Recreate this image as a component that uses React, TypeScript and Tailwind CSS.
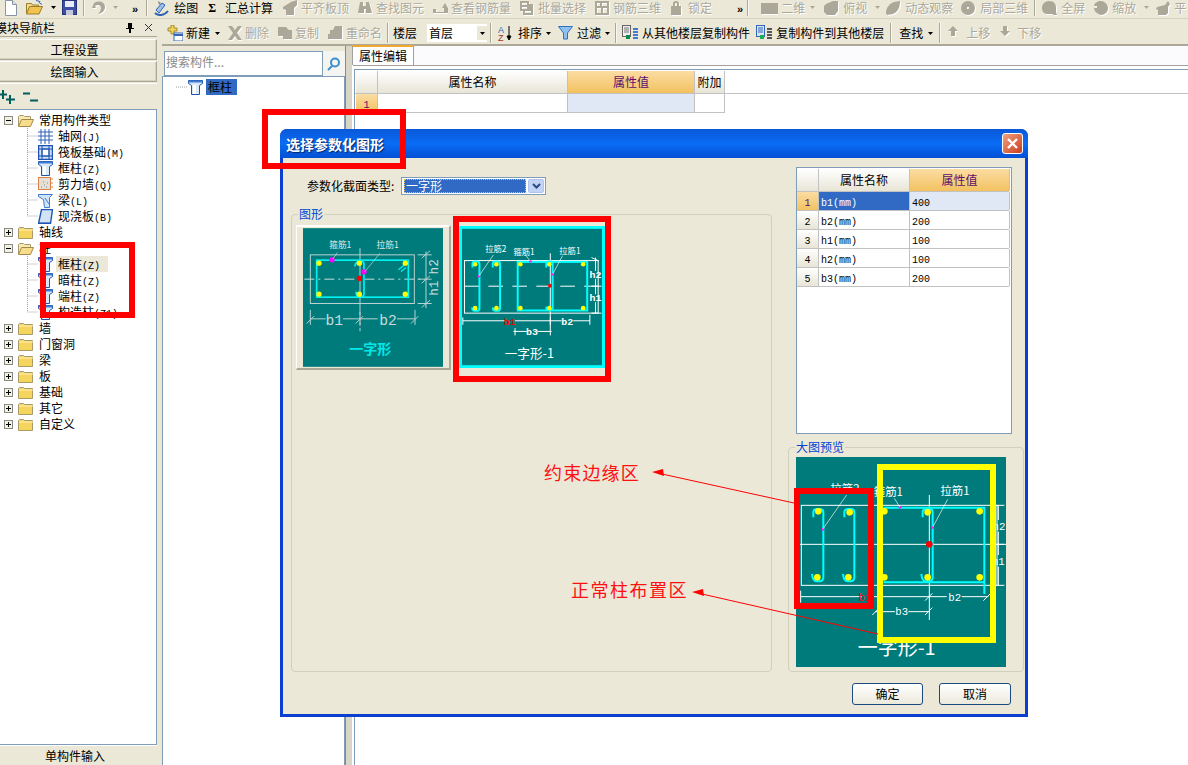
import React from "react";

const D = "text-[#aca899] [text-shadow:1px_1px_0_#fff]";
const CJK = "Noto Sans CJK SC, sans-serif";

function Ghost({ d, w = 16 }: { d: string; w?: number }) {
  return (
    <svg width={w} height={16} viewBox={`0 0 ${w} 16`} className="shrink-0">
      <path d={d} fill="#fff" fillRule="evenodd" transform="translate(1,1)" />
      <path d={d} fill="#aca899" fillRule="evenodd" />
    </svg>
  );
}

function Caret({ grey }: { grey?: boolean }) {
  return (
    <svg width={5} height={3} viewBox="0 0 5 3" className="shrink-0">
      <path d="M0 0h5L2.5 3z" fill={grey ? "#aca899" : "#000"} />
    </svg>
  );
}

function Sep({ h = 20 }: { h?: number }) {
  return <div className="w-[2px] shrink-0 border-l border-[#aca899] border-r-white bg-white/60" style={{ height: h }} />;
}

function More() {
  return <span className="text-[11px] leading-none font-bold text-black [font-family:'Liberation_Sans',sans-serif] -mt-2">»</span>;
}

function G({ d, t, w, caret }: { d: string; t: string; w?: number; caret?: boolean }) {
  return (
    <div className="flex items-center gap-[3px] shrink-0">
      <Ghost d={d} w={w} />
      <span className={D}>{t}</span>
      {caret && <span className="ml-[3px]"><Caret grey /></span>}
    </div>
  );
}

function PageIcon() {
  return (
    <svg width={14} height={16} viewBox="0 0 14 16" className="shrink-0">
      <path d="M1.5 .5h7l4 4v11h-11z" fill="#fff" stroke="#8b93a7" />
      <path d="M8.5 .5v4h4" fill="#dfe6f2" stroke="#8b93a7" />
    </svg>
  );
}
function OpenFolderBig() {
  return (
    <svg width={17} height={15} viewBox="0 0 17 15" className="shrink-0">
      <path d="M.5 13V3.5h5l1 1.5h6v2" fill="#f3d98a" stroke="#9b7d30" />
      <path d="M.5 14l3-7.5h13L13 14z" fill="#f1c34f" stroke="#9b7d30" />
      <path d="M10 .5l4 1-1 1 3 2" fill="none" stroke="#3566b8" />
    </svg>
  );
}
function Floppy() {
  return (
    <svg width={15} height={15} viewBox="0 0 15 15" className="shrink-0">
      <rect x=".5" y=".5" width="14" height="14" fill="#3c4ea6" stroke="#26327a" />
      <rect x="3" y="1" width="9" height="6" fill="#e8ecf7" />
      <rect x="4" y="10" width="7" height="5" fill="#c5c9d9" />
    </svg>
  );
}
function DrawIcon() {
  return (
    <svg width={16} height={16} viewBox="0 0 16 16" className="shrink-0">
      <path d="M2 10l6-7 3 2-6 8z" fill="#9ec1ea" stroke="#2f62b4" />
      <path d="M1 13c3 3 9 3 13-2" fill="none" stroke="#2f62b4" strokeWidth="2" />
      <path d="M4 1l3 2-2 2z" fill="#888" />
    </svg>
  );
}

function ColumnIcon() {
  return (
    <svg width={15} height={16} viewBox="0 0 15 16" className="shrink-0">
      <path d="M.5 1.5h14v3l-3 2v9h-8v-9l-3-2z" fill="#dbe8f8" stroke="#1f55b0" />
      <path d="M.5 1.5h14v2H.5z" fill="#3f7bd0" />
      <path d="M5 6h3v9H5z" fill="#fff" />
    </svg>
  );
}
function GridIcon() {
  return (
    <svg width={15} height={15} viewBox="0 0 15 15" className="shrink-0">
      <path d="M3 0v15M7 0v15M11 0v15M0 3h15M0 7h15M0 11h15" stroke="#2f62b4" fill="none" />
    </svg>
  );
}
function RaftIcon() {
  return (
    <svg width={15} height={15} viewBox="0 0 15 15" className="shrink-0">
      <rect x=".5" y=".5" width="14" height="14" fill="#cfe0f5" stroke="#1f55b0" strokeWidth="1.5" />
      <rect x="4" y="4" width="7" height="7" fill="#fff" stroke="#1f55b0" />
      <path d="M0 4h15M0 11h15M4 0v15M11 0v15" stroke="#1f55b0" />
    </svg>
  );
}
function WallIcon() {
  return (
    <svg width={15} height={14} viewBox="0 0 15 14" className="shrink-0">
      <rect x=".5" y=".5" width="12" height="12" fill="#e4e0d8" stroke="#d9824a" />
      <path d="M13 2h2M13 6h2M13 10h2" stroke="#d9824a" />
      <path d="M3 10h1M6 8h1M8 10h1M5 5h1M9 6h1" stroke="#888" />
    </svg>
  );
}
function BeamIcon() {
  return (
    <svg width={15} height={16} viewBox="0 0 15 16" className="shrink-0">
      <path d="M.5 2.5h14l-3 3v10h-5l-1-8-5-3z" fill="#cfe4f7" stroke="#3f7bd0" />
      <path d="M7 6l4 6" stroke="#3f7bd0" />
    </svg>
  );
}
function SlabIcon() {
  return (
    <svg width={15} height={15} viewBox="0 0 15 15" className="shrink-0">
      <path d="M3.5.5h11l-2 14H.5z" fill="#d3e3f7" stroke="#1f55b0" strokeWidth="1.4" />
      <path d="M.5 14.5h12" stroke="#1f55b0" strokeWidth="2" />
    </svg>
  );
}
function Folder({ open }: { open?: boolean }) {
  return (
    <svg width={16} height={13} viewBox="0 0 16 13" className="shrink-0">
      {open ? (
        <>
          <path d="M.5 12V2.5l1-1h4l1 1h6v3" fill="#f9e9b0" stroke="#a89a6a" />
          <path d="M.5 12.5l3-7h12l-3 7z" fill="#f7dc8b" stroke="#a08a4a" />
        </>
      ) : (
        <>
          <path d="M.5 2.5l1-1h4l1 1h8v10H.5z" fill="#f6d55f" stroke="#a89a6a" />
          <path d="M1 4h14" stroke="#fdf0b8" />
        </>
      )}
    </svg>
  );
}
function Box({ open }: { open?: boolean }) {
  return (
    <svg width={9} height={9} viewBox="0 0 9 9" className="shrink-0">
      <rect x=".5" y=".5" width="8" height="8" fill="#f3f1e6" stroke="#8a8a80" />
      <path d={open ? "M2 4.5h5" : "M2 4.5h5M4.5 2v5"} stroke="#000" />
    </svg>
  );
}
function Conn({ last }: { last?: boolean }) {
  return (
    <svg width={11} height={16} viewBox="0 0 11 16" className="shrink-0">
      <path d={last ? "M.5 0v8H11" : "M.5 0v16M.5 8H11"} stroke="#a0a0a0" strokeDasharray="1 1" fill="none" />
    </svg>
  );
}

function Mono({ children }: { children: React.ReactNode }) {
  return <span className="text-[10px] [font-family:'Liberation_Mono',monospace]">{children}</span>;
}

function Child({ icon, t, k, last, sel }: { icon: React.ReactNode; t: string; k: string; last?: boolean; sel?: boolean }) {
  return (
    <div className="flex h-[16px] items-center pl-[27px]">
      <Conn last={last} />
      <span className="w-[15px] flex justify-center">{icon}</span>
      <span className={`ml-[3px] px-[2px] h-[16px] leading-[16px] whitespace-nowrap ${sel ? "bg-[#ebe8d8] pr-[8px]" : ""}`}>
        {t}
        <Mono>({k})</Mono>
      </span>
    </div>
  );
}
function Root({ t, open }: { t: string; open?: boolean }) {
  return (
    <div className="flex h-[16px] items-center pl-[4px]">
      <Box open={open} />
      <span className="ml-[5px]"><Folder open={open} /></span>
      <span className="ml-[5px] leading-[16px]">{t}</span>
    </div>
  );
}

function Thumb1() {
  const f = { fontFamily: CJK };
  return (
    <svg width={140} height={139} viewBox="24 40 420 416" className="block shrink-0">
      <rect x="24" y="40" width="420" height="416" fill="#007b7b" />
      <rect x="46" y="120" width="312" height="146" fill="none" stroke="#b6d2d2" strokeWidth="3" />
      <path d="M28 193H390" stroke="#c9dcdc" strokeWidth="3" strokeDasharray="30 12 6 12" />
      <path d="M195 100V350" stroke="#b6d2d2" strokeWidth="3" />
      <path d="M195 285V350" stroke="#123" strokeWidth="3" strokeDasharray="6 10" />
      <rect x="65" y="136" width="275" height="111" fill="none" stroke="#00f0f0" strokeWidth="5" />
      <path d="M180 155q0-15 15-15h6q6 0 6 10v85q0 10-6 10h-8q-10 0-10-14" fill="none" stroke="#00f0f0" strokeWidth="5" />
      <path d="M310 165l25-20M318 170l15-12" stroke="#00f0f0" strokeWidth="4" />
      {[[72, 145], [193, 145], [331, 145], [72, 238], [193, 238], [331, 238]].map(([x, y]) => (
        <circle key={`${x}${y}`} cx={x} cy={y} r={8} fill="#ffff00" />
      ))}
      <circle cx="111" cy="135" r="8" fill="#ff00ff" />
      <circle cx="207" cy="171" r="8" fill="#ff00ff" />
      <circle cx="193" cy="191" r="8" fill="#ff0000" />
      <path d="M127 113l-14 20M255 115l-46 56" stroke="#c9dcdc" strokeWidth="2" />
      <text x="136" y="99" textAnchor="middle" fontSize="26" fill="#d9e8e8" style={f}>箍筋1</text>
      <text x="278" y="99" textAnchor="middle" fontSize="26" fill="#d9e8e8" style={f}>拉筋1</text>
      <path d="M46 312H92M144 312H248M306 312H360M46 285V330M195 285V330M360 285V330" stroke="#b6d2d2" strokeWidth="3" fill="none" />
      <path d="M35 326l22-22M182 326l22-22M348 326l22-22" stroke="#b6d2d2" strokeWidth="3" />
      <text x="118" y="330" textAnchor="middle" fontSize="44" fill="#c9dcdc" style={{ fontFamily: "Liberation Mono, monospace" }}>b1</text>
      <text x="279" y="330" textAnchor="middle" fontSize="44" fill="#c9dcdc" style={{ fontFamily: "Liberation Mono, monospace" }}>b2</text>
      <path d="M393 110V280M368 120H410M368 193H410M368 266H410" stroke="#b6d2d2" strokeWidth="3" />
      <path d="M380 130l25-22M380 205l25-22M380 278l25-22" stroke="#b6d2d2" strokeWidth="3" />
      <text transform="translate(430 156) rotate(-90)" textAnchor="middle" fontSize="38" fill="#c9dcdc" style={{ fontFamily: "Liberation Mono, monospace" }}>h2</text>
      <text transform="translate(430 220) rotate(-90)" textAnchor="middle" fontSize="38" fill="#c9dcdc" style={{ fontFamily: "Liberation Mono, monospace" }}>h1</text>
      <text x="226" y="418" textAnchor="middle" fontSize="42" fontWeight="700" fill="#00e8e8" style={f}>一字形</text>
    </svg>
  );
}

function Thumb2() {
  const f = { fontFamily: CJK };
  const mono = { fontFamily: "Liberation Mono, monospace", fontWeight: 700 };
  return (
    <svg width={146} height={142} viewBox="27 33 438 427" className="block shrink-0">
      <rect x="27" y="33" width="438" height="427" fill="#007b7b" />
      <rect x="31" y="37" width="430" height="419" fill="none" stroke="#00ffff" strokeWidth="9" />
      <rect x="43" y="137" width="402" height="158" fill="none" stroke="#fff" strokeWidth="3" />
      <path d="M43 214H455" stroke="#fff" strokeWidth="3" strokeDasharray="44 28" />
      <path d="M301 115V340" stroke="#fff" strokeWidth="3" />
      <path d="M67 158v-12q0-6 8-6h5q8 0 8 8v132q0 8-8 8h-6q-8 0-8-10" fill="none" stroke="#00ffff" strokeWidth="6" />
      <path d="M128 158v-12q0-6 8-6h6q8 0 8 8v132q0 8-8 8h-6q-8 0-8-10" fill="none" stroke="#00ffff" strokeWidth="6" />
      <rect x="203" y="141" width="209" height="146" fill="none" stroke="#00ffff" strokeWidth="6" />
      <path d="M289 158v-12q0-6 8-6h6q5 0 5 8v132q0 6-5 6h-6q-8 0-8-10" fill="none" stroke="#00ffff" strokeWidth="6" />
      {[[75, 148], [139, 148], [211, 148], [298, 148], [400, 148], [75, 280], [139, 280], [211, 280], [298, 280], [400, 280]].map(([x, y]) => (
        <circle key={`${x}${y}`} cx={x} cy={y} r={7} fill="#ffff00" />
      ))}
      {[[86, 184], [241, 139], [308, 178]].map(([x, y]) => (
        <circle key={`${x}${y}`} cx={x} cy={y} r={4} fill="#ff00ff" />
      ))}
      <circle cx="300" cy="213" r="6" fill="#ff0000" />
      <path d="M130 120L86 184M228 122L241 139M338 122L308 178" stroke="#fff" strokeWidth="2" />
      <text x="137" y="112" textAnchor="middle" fontSize="25" fill="#fff" style={f}>拉筋2</text>
      <text x="222" y="119" textAnchor="middle" fontSize="25" fill="#fff" style={f}>箍筋1</text>
      <text x="360" y="116" textAnchor="middle" fontSize="25" fill="#fff" style={f}>拉筋1</text>
      <path d="M38 318H165M195 318H335M370 318H420M38 308V330M420 300V330M301 308V330" stroke="#fff" strokeWidth="3" fill="none" />
      <text x="179" y="330" textAnchor="middle" fontSize="30" fill="#ff0000" style={mono}>b1</text>
      <text x="352" y="330" textAnchor="middle" fontSize="30" fill="#fff" style={mono}>b2</text>
      <path d="M190 350H230M262 350H305M195 340V362M301 340V362" stroke="#fff" strokeWidth="3" fill="none" />
      <text x="246" y="360" textAnchor="middle" fontSize="30" fill="#fff" style={mono}>b3</text>
      <path d="M437 128V168M437 192V238M437 262V295M425 128l22 10M425 295h30M425 214h30" stroke="#fff" strokeWidth="3" fill="none" />
      <text x="437" y="189" textAnchor="middle" fontSize="30" fill="#fff" style={mono}>h2</text>
      <text x="437" y="259" textAnchor="middle" fontSize="30" fill="#fff" style={mono}>h1</text>
      <text x="238" y="431" textAnchor="middle" fontSize="38" fill="#fff" style={f}>一字形-1</text>
    </svg>
  );
}

function Preview() {
  const f = { fontFamily: CJK };
  const mono = { fontFamily: "Liberation Mono, monospace" };
  return (
    <svg width={210} height={210} viewBox="33 51 630 630" className="block shrink-0">
      <rect x="33" y="51" width="630" height="630" fill="#007b7b" />
      <rect x="49" y="196" width="587" height="240" fill="none" stroke="#fff" strokeWidth="3" />
      <path d="M33 313H663" stroke="#fff" strokeWidth="3" />
      <path d="M433 165V540" stroke="#fff" strokeWidth="3" />
      <path d="M85 232v-15q0-10 12-10h8q10 0 10 10v195q0 12-12 12h-8q-12 0-14-22" fill="none" stroke="#00ffff" strokeWidth="6" />
      <path d="M178 232v-15q0-10 12-10h8q10 0 10 10v195q0 12-12 12h-8q-12 0-14-22" fill="none" stroke="#00ffff" strokeWidth="6" />
      <path d="M295 203H598V462M295 427H598" fill="none" stroke="#00ffff" strokeWidth="6" />
      <path d="M413 232v-15q0-10 12-10h8q10 0 10 10v195q0 12-12 12h-8q-12 0-14-22" fill="none" stroke="#00ffff" strokeWidth="6" />
      {[[100, 214], [194, 217], [298, 214], [428, 217], [584, 214], [97, 412], [190, 412], [298, 412], [428, 412], [584, 412]].map(([x, y]) => (
        <circle key={`${x}${y}`} cx={x} cy={y} r={10} fill="#ffff00" />
      ))}
      {[[113, 268], [345, 202], [443, 262]].map(([x, y]) => (
        <circle key={`${x}${y}`} cx={x} cy={y} r={4} fill="#ff00ff" />
      ))}
      <circle cx="433" cy="313" r="10" fill="#ff0000" />
      <path d="M185 165L113 268M328 175L345 202M488 178L443 262" stroke="#fff" strokeWidth="2" />
      <text x="180" y="160" textAnchor="middle" fontSize="34" fill="#fff" style={f}>拉筋2</text>
      <text x="310" y="169" textAnchor="middle" fontSize="34" fill="#fff" style={f}>箍筋1</text>
      <text x="510" y="165" textAnchor="middle" fontSize="34" fill="#fff" style={f}>拉筋1</text>
      <path d="M45 470H230M255 470H485M530 470H610M420 482l22-22M595 482l22-22M47 452V488" stroke="#fff" strokeWidth="3" fill="none" />
      <text x="240" y="484" textAnchor="middle" fontSize="32" fill="#ff0000" style={mono}>b1</text>
      <text x="509" y="484" textAnchor="middle" fontSize="32" fill="#fff" style={mono}>b2</text>
      <path d="M270 515H330M370 515H435M262 525l22-22M420 525l22-22" stroke="#fff" strokeWidth="3" fill="none" />
      <text x="350" y="525" textAnchor="middle" fontSize="32" fill="#fff" style={mono}>b3</text>
      <path d="M640 196V240M640 275V345M640 380V436M630 196h28M630 313h28M630 436h28" stroke="#fff" strokeWidth="3" fill="none" />
      <text x="642" y="270" textAnchor="middle" fontSize="32" fill="#fff" style={mono}>h2</text>
      <text x="640" y="374" textAnchor="middle" fontSize="32" fill="#fff" style={mono}>h1</text>
      <text x="335" y="645" textAnchor="middle" fontSize="60" fill="#fff" style={f}>一字形-1</text>
    </svg>
  );
}

function TopBar() {
  return (
    <div className="flex h-[19px] shrink-0 items-center overflow-hidden whitespace-nowrap pl-[4px] pb-[3px] border-b border-[#d6d2c0] text-[12px]">
      <PageIcon />
      <span className="ml-[8px]"><OpenFolderBig /></span>
      <span className="ml-[8px]"><Caret /></span>
      <span className="ml-[6px]"><Floppy /></span>
      <span className="ml-[6px]"><Sep h={16} /></span>
      <span className="ml-[6px]"><Ghost d="M3 3l-2 5h4L4 6c3-2 6-1 6 2 0 2-1 4-3 6 5-1 7-4 7-7 0-5-6-7-11-4z" w={15} /></span>
      <span className="ml-[7px]"><Caret grey /></span>
      <span className="ml-[14px]"><More /></span>
      <span className="ml-[8px] mr-[6px] flex gap-[1px]"><Sep h={17} /></span>
      <div className="flex items-center gap-[4px]"><DrawIcon /><span>绘图</span></div>
      <span className="ml-[10px] font-bold text-[12px] [font-family:'Liberation_Serif',serif]">Σ</span>
      <span className="ml-[9px] mr-[9px]">汇总计算</span>
      <div className="flex items-center gap-[8px]">
        <G t="平齐板顶" d="M1 7l8-5 6-2v5l-3 3v7H4v-5L1 9z" />
        <G t="查找图元" d="M3 2h3v4h3V2h3l3 11h-6V9H7v4H1z" />
        <G t="查看钢筋量" d="M1 9h3v3h8V8l-2 0 3-5 3 5v5H1z" />
        <G t="批量选择" d="M1 1h9v3h4v11H4v-4H1zM3 3v2h5V3zM3 7v2h5V7zM6 11v2h6v-2z" />
        <G t="钢筋三维" d="M1 1h14v14H1zM3 3v3h3V3zM8 3v3h5V3zM3 8v5h4V8zM9 8v5h4V8z" />
        <div className="flex items-center gap-[5px]"><Ghost w={14} d="M4 6V4a3 3 0 0 1 6 0v2h2v9H2V6zM6 6h2V4a1 1 0 0 0-2 0z" /><span className={D}>锁定</span></div>
      </div>
      <span className="ml-[25px]"><More /></span>
      <span className="ml-[4px] flex"><Sep h={17} /></span>
      <div className="ml-[12px] flex items-center">
        <Ghost w={17} d="M0 3h17v11H0z" />
        <span className={`${D} ml-[3px]`}>二维</span>
        <span className="ml-[5px]"><Caret grey /></span>
        <span className="ml-[8px]"><Ghost d="M3 4l7-3h5v10l-3 4H4L1 12V6z" /></span>
        <span className={`${D} ml-[4px]`}>俯视</span>
        <span className="ml-[8px]"><Caret grey /></span>
        <span className="ml-[5px]"><Ghost d="M1 13c0-5 3-9 8-11l6-1c0 6-2 11-7 13l-6 1z" /></span>
        <span className={`${D} ml-[4px]`}>动态观察</span>
        <span className="ml-[7px]"><Ghost d="M8 1a7 7 0 1 1 0 14A7 7 0 0 1 8 1zM7 7v2h2V7z" /></span>
        <span className={`${D} ml-[4px]`}>局部三维</span>
        <span className="ml-[6px] mr-[5px] flex"><Sep h={17} /></span>
        <Ghost d="M8 1c5 0 7 3 7 6v5l1 3h-3l-2-1H6c-3 0-5-3-5-6 0-4 3-7 7-7z" />
        <span className={`${D} ml-[4px]`}>全屏</span>
        <span className="ml-[8px]"><Ghost d="M8 1c3 0 7 3 7 7s-3 7-7 7c-2 0-7-3-7-7h3V6H1c0-3 4-5 7-5z" /></span>
        <span className={`${D} ml-[3px]`}>缩放</span>
        <span className="ml-[8px]"><Caret grey /></span>
        <span className="ml-[6px]"><Ghost w={17} d="M2 7l8-2 3-4 2 3-2 3v6l-2 2H3V10L1 9z" /></span>
        <span className={`${D} ml-[2px]`}>平</span>
      </div>
    </div>
  );
}

function SideButton({ t }: { t: string }) {
  return (
    <div className="h-[21px] flex items-center justify-center pr-[7px] bg-[#ebe8d8] border-t border-white border-r border-b border-r-[#aca899] border-b-[#aca899] shadow-[inset_-1px_-1px_0_#d6d2c0]">
      {t}
    </div>
  );
}

function LeftPanel() {
  return (
    <div className="flex w-[157px] shrink-0 flex-col">
      <div className="flex h-[18px] items-center justify-between border-b border-[#aca899] pr-[3px] overflow-hidden">
        <span className="-ml-[5px] whitespace-nowrap">模块导航栏</span>
        <div className="flex items-center gap-[9px] pr-[1px]">
          <svg width={10} height={11} viewBox="0 0 10 11"><path d="M3 1h4v5h2v1H6v4H4V7H1V6h2z" fill="#000" /></svg>
          <svg width={9} height={9} viewBox="0 0 9 9"><path d="M1 1l7 7M8 1l-7 7" stroke="#333" /></svg>
        </div>
      </div>
      <div className="mt-[2px] flex flex-col gap-[1px]">
        <SideButton t="工程设置" />
        <SideButton t="绘图输入" />
      </div>
      <div className="mt-[1px] h-[26px] flex items-center border-t border-[#fff]">
        <svg width={40} height={16} viewBox="0 0 40 16" className="shrink-0">
          <path d="M3 1v9M-1 5.5h8M10 6v9M6 10.5h9M23 4.5h7M30 11.5h8" stroke="#005e5e" strokeWidth="2" fill="none" />
        </svg>
      </div>
      <div className="flex-1 bg-white border border-[#7f9db9] border-l-0 pt-[2px] overflow-hidden">
        <Root t="常用构件类型" open />
        <Child icon={<GridIcon />} t="轴网" k="J" />
        <Child icon={<RaftIcon />} t="筏板基础" k="M" />
        <Child icon={<ColumnIcon />} t="框柱" k="Z" />
        <Child icon={<WallIcon />} t="剪力墙" k="Q" />
        <Child icon={<BeamIcon />} t="梁" k="L" />
        <Child icon={<SlabIcon />} t="现浇板" k="B" last />
        <Root t="轴线" />
        <Root t="柱" open />
        <Child icon={<ColumnIcon />} t="框柱" k="Z" sel />
        <Child icon={<ColumnIcon />} t="暗柱" k="Z" />
        <Child icon={<ColumnIcon />} t="端柱" k="Z" />
        <Child icon={<ColumnIcon />} t="构造柱" k="Z1" last />
        {["墙", "门窗洞", "梁", "板", "基础", "其它", "自定义"].map((t) => (
          <Root key={t} t={t} />
        ))}
      </div>
      <div className="h-[20px] flex items-center justify-center border-t border-white pr-[7px] whitespace-nowrap">单构件输入</div>
    </div>
  );
}

function Toolbar2() {
  return (
    <div className="h-[27px] shrink-0 flex items-center whitespace-nowrap border-b-2 border-[#aca899] pl-[5px] pt-[3px]">
      <svg width={16} height={16} viewBox="0 0 16 16" className="shrink-0"><path d="M4 0v3H1v3h3v3h3V6h3V3H7V0z" fill="#f0d45a" stroke="#a48a2a" /><rect x="7" y="8" width="9" height="8" fill="#fff" stroke="#3566b8" /><path d="M7 10h9" stroke="#3566b8" strokeWidth="2" /></svg>
      <span className="ml-[3px]">新建</span>
      <span className="ml-[5px]"><Caret /></span>
      <span className="ml-[7px]"><G t="删除" w={15} d="M1 1h4l3 4 3-4h4l-5 7 5 7h-4l-3-4-3 4H1l5-7z" /></span>
      <span className="ml-[8px]"><G t="复制" w={15} d="M1 2h8l3 3h3v9H6v-3H1z" /></span>
      <span className="ml-[8px]"><G t="重命名" d="M8 1h7v13H1V9h2V5h3z" /></span>
      <span className="ml-[5px] mr-[4px]"><Sep /></span>
      <span>楼层</span>
      <div className="ml-[10px] w-[60px] h-[18px] bg-white flex items-center">
        <span className="pl-[2px] flex-1">首层</span>
        <span className="w-[10px] h-[14px] bg-[#ebe8d8] flex items-center justify-center"><Caret /></span>
      </div>
      <span className="ml-[3px] mr-[6px]"><Sep /></span>
      <svg width={15} height={16} viewBox="0 0 15 16" className="shrink-0"><text x="0" y="8" fontSize="9" fill="#3566b8" style={{ fontFamily: "Liberation Sans, sans-serif" }}>A</text><text x="0" y="16" fontSize="9" fill="#a03030" style={{ fontFamily: "Liberation Sans, sans-serif" }}>Z</text><path d="M11 1v12M9 11l2 4 2-4z" stroke="#000" /></svg>
      <span className="ml-[5px]">排序</span>
      <span className="ml-[4px]"><Caret /></span>
      <svg width={15} height={14} viewBox="0 0 15 14" className="ml-[7px] shrink-0"><path d="M.5.5h14L9.5 7v6h-4V7z" fill="#8fc0ee" stroke="#2f72c4" /></svg>
      <span className="ml-[4px]">过滤</span>
      <span className="ml-[4px]"><Caret /></span>
      <span className="ml-[5px] mr-[5px]"><Sep /></span>
      <svg width={16} height={16} viewBox="0 0 16 16" className="shrink-0"><rect x=".5" y=".5" width="8" height="11" fill="#eee" stroke="#666" /><path d="M2 3h5M2 5h5M2 7h5" stroke="#777" /><path d="M4 10h4v4H4z" fill="#0a8a4a" /><path d="M11 4h5M11 7h5M11 10h5M11 13h5" stroke="#3f7bd0" strokeWidth="2" /></svg>
      <span className="ml-[4px]">从其他楼层复制构件</span>
      <svg width={16} height={16} viewBox="0 0 16 16" className="ml-[6px] shrink-0"><rect x=".5" y=".5" width="8" height="11" fill="#d7e4f6" stroke="#3566b8" /><path d="M2 3h5M2 5h5M2 7h5" stroke="#3566b8" /><path d="M4 10h4v4H4z" fill="#18b050" /><path d="M11 4h5M11 7h5M11 10h5M11 13h5" stroke="#555" strokeWidth="2" /></svg>
      <span className="ml-[4px]">复制构件到其他楼层</span>
      <span className="ml-[6px] mr-[7px]"><Sep /></span>
      <span>查找</span>
      <span className="ml-[5px]"><Caret /></span>
      <span className="ml-[6px] mr-[7px]"><Sep /></span>
      <Ghost w={10} d="M5 1l5 5H7v5H3V6H0z" />
      <span className={`${D} ml-[8px]`}>上移</span>
      <span className="ml-[10px]"><Ghost w={10} d="M3 1h4v5h3l-5 5-5-5h3z" /></span>
      <span className={`${D} ml-[7px]`}>下移</span>
    </div>
  );
}

function Th({ t, hot, w }: { t: string; hot?: boolean; w: string }) {
  return (
    <div
      className={`${w} shrink-0 h-full flex items-center justify-center border-r border-[#c2c2c2] ${
        hot ? "bg-linear-to-b from-[#fbdca2] to-[#f3c25f] text-[#5c0f6e]" : "bg-linear-to-b from-white to-[#e8e5d6]"
      }`}
    >
      {t}
    </div>
  );
}

function MainArea() {
  return (
    <div className="flex-1 bg-white flex flex-col min-w-0">
      <div className="h-[20px] flex items-end bg-[#fbfbfd] border-b border-[#a0a0a0]">
        <div className="w-[62px] h-[20px] ml-[-1px] bg-white border-t-2 border-t-[#f0a830] border-x border-[#a0a0a0] flex items-center justify-center">属性编辑</div>
      </div>
      <div className="mt-[3px] flex-1 border-t border-l border-[#7f9db9] ml-[1px]">
        <div className="flex h-[23px] border-b border-[#c2c2c2] mt-[1px]">
          <Th t="" w="w-[22px] ml-[1px]" />
          <Th t="属性名称" w="w-[190px]" />
          <Th t="属性值" hot w="w-[127px]" />
          <Th t="附加" w="w-[30px]" />
        </div>
        <div className="flex h-[19px] border-b border-[#c2c2c2] w-[370px]">
          <div className="w-[22px] ml-[1px] bg-linear-to-b from-[#fbdca2] to-[#f3c25f] border-r border-[#c2c2c2] text-center text-[#5c0f6e] leading-[18px]"><Mono>1</Mono></div>
          <div className="w-[190px] border-r border-[#c2c2c2]" />
          <div className="w-[127px] bg-[#dfe8f4] border-r border-[#c2c2c2]" />
          <div className="w-[30px] border-r border-[#c2c2c2]" />
        </div>
      </div>
    </div>
  );
}

const ROWS = [
  ["b1", "400"],
  ["b2", "200"],
  ["h1", "100"],
  ["h2", "100"],
  ["b3", "200"],
];

function Group({ t, className, children }: { t: string; className: string; children: React.ReactNode }) {
  return (
    <div className={`relative rounded-[4px] border border-[#d0d0bf] ${className}`}>
      <span className="absolute -top-[8px] left-[6px] bg-[#ebe8d8] px-[1px] text-[#0046d5] leading-[14px]">{t}</span>
      {children}
    </div>
  );
}

function Dialog() {
  return (
    <div className="absolute left-[280px] top-[129px] w-[748px] h-[588px] flex flex-col rounded-t-[7px] bg-[#0a3fd0] p-[3px] pt-0 overflow-hidden">
      <div className="h-[29px] -mx-[3px] shrink-0 flex items-center justify-between bg-linear-to-b from-[#0a58d8] via-[#0a6cf5] to-[#0550d4] pl-[6px] pr-[5px]">
        <span className="text-white font-bold text-[14px] [text-shadow:1px_1px_1px_#0a246a]">选择参数化图形</span>
        <div className="w-[21px] h-[21px] rounded-[3px] border border-white bg-linear-to-br from-[#f0a080] to-[#c83818] flex items-center justify-center">
          <svg width={13} height={13} viewBox="0 0 13 13"><path d="M2 2l9 9M11 2l-9 9" stroke="#fff" strokeWidth="2.4" /></svg>
        </div>
      </div>
      <div className="flex-1 bg-[#ebe8d8] flex flex-col">
        <div className="flex h-[514px] pl-[8px]">
          <div className="w-[481px] shrink-0 flex flex-col pt-[19px]">
            <div className="h-[18px] flex items-center pl-[16px]">
              <span className="w-[94px]">参数化截面类型:</span>
              <div className="w-[145px] h-[18px] border border-[#7f9db9] bg-white flex items-center p-[1px] gap-[1px]">
                <span className="w-[122px] h-full ml-[1px] bg-[#316ac5] text-white border border-dotted border-[#e8c060] leading-[12px] text-[12px] pl-[1px]">一字形</span>
                <span className="w-[16px] h-full ml-auto bg-[#c3d3f5] border border-[#b0c4ee] rounded-[2px] flex items-center justify-center">
                  <svg width={9} height={6} viewBox="0 0 9 6"><path d="M1 1l3.5 3.5L8 1" fill="none" stroke="#2a4a8a" strokeWidth="2" /></svg>
                </span>
              </div>
            </div>
            <Group t="图形" className="mt-[19px] h-[458px] pl-[4px] pt-[10px]">
              <div className="flex">
                <div className="w-[155px] h-[145px] bg-[#ebe8d8] border-t-2 border-l border-white border-b-2 border-r-2 border-r-[#aca899] border-b-[#aca899] pl-[6px] pt-[1px]">
                  <Thumb1 />
                </div>
                <div className="ml-[7px] h-[150px] w-[148px] -mt-[2px] pt-[3px] pl-[1px]">
                  <Thumb2 />
                </div>
              </div>
            </Group>
          </div>
          <div className="ml-[16px] w-[236px] shrink-0 pt-[9px] flex flex-col">
            <div className="ml-[8px] w-[216px] h-[267px] bg-white border border-[#7f9db9] pt-[1px] pr-[2px]">
              <div className="flex h-[23px] border-b border-[#c2c2c2]">
                <Th t="" w="w-[22px]" />
                <Th t="属性名称" w="w-[91px]" />
                <Th t="属性值" hot w="w-[100px]" />
              </div>
              {ROWS.map(([n, v], i) => (
                <div key={n} className="flex h-[19px] border-b border-[#c2c2c2] leading-[18px]">
                  <div className={`w-[22px] shrink-0 text-center border-r border-[#c2c2c2] ${i === 0 ? "bg-linear-to-b from-[#fbdca2] to-[#f3c25f] text-[#5c0f6e]" : "bg-linear-to-b from-white to-[#e8e5d6]"}`}><Mono>{i + 1}</Mono></div>
                  <div className={`w-[91px] shrink-0 pl-[2px] border-r border-[#c2c2c2] ${i === 0 ? "bg-[#316ac5] text-white" : ""}`}><Mono>{n}(mm)</Mono></div>
                  <div className={`w-[100px] shrink-0 pl-[2px] border-r border-[#c2c2c2] ${i === 0 ? "bg-[#dfe8f4]" : ""}`}><Mono>{v}</Mono></div>
                </div>
              ))}
            </div>
            <Group t="大图预览" className="mt-[13px] h-[225px] pl-[7px] pt-[9px]">
              <Preview />
            </Group>
          </div>
        </div>
        <div className="flex justify-end gap-[16px] pr-[14px] pt-[11px]">
          <div className="w-[71px] h-[22px] rounded-[3px] border border-[#1c4a80] bg-linear-to-b from-white to-[#ece9dc] flex items-center justify-center">确定</div>
          <div className="w-[72px] h-[22px] rounded-[3px] border border-[#1c4a80] bg-linear-to-b from-white to-[#ece9dc] flex items-center justify-center">取消</div>
        </div>
      </div>
    </div>
  );
}

function Notes() {
  return (
    <>
      <div className="absolute left-[262px] top-[109px] w-[144px] h-[60px] border-[6px] border-[#ff0000]" />
      <div className="absolute left-[40px] top-[242px] w-[95px] h-[76px] border-[6px] border-[#ff0000]" />
      <div className="absolute left-[453px] top-[216px] w-[158px] h-[166px] border-[6px] border-[#ff0000]" />
      <div className="absolute left-[794px] top-[488px] w-[80px] h-[121px] border-[6px] border-[#ff0000]" />
      <div className="absolute left-[877px] top-[464px] w-[119px] h-[179px] border-[6px] border-[#ffff00]" />
      <svg width={1188} height={765} viewBox="0 0 1188 765" className="absolute left-0 top-0 pointer-events-none">
        <path d="M662 474L794 503M702 594L878 634" stroke="#ff0000" fill="none" />
        <path d="M652 472l11-3 1 7zM692 592l11-3 1 7z" fill="#ff0000" />
      </svg>
      <span className="absolute left-[544px] top-[461px] text-[18px] leading-[22px] text-[#ff1010] tracking-[1.2px] whitespace-nowrap">约束边缘区</span>
      <span className="absolute left-[571px] top-[578px] text-[18px] leading-[22px] text-[#ff1010] tracking-[1.5px] whitespace-nowrap">正常柱布置区</span>
    </>
  );
}

export default function App() {
  return (
    <div className="relative w-[1188px] h-[765px] overflow-hidden bg-[#ebe8d8] text-[12px] leading-[14px] text-black flex flex-col [font-family:'Noto_Sans_CJK_SC',sans-serif]">
      <TopBar />
      <div className="flex flex-1 min-h-0">
        <LeftPanel />
        <div className="ml-[5px] flex-1 min-w-0 flex flex-col">
          <Toolbar2 />
          <div className="flex flex-1 min-h-0">
            <div className="w-[183px] shrink-0 flex flex-col">
              <div className="h-[30px] pt-[5px] flex">
                <div className="w-[159px] ml-[2px] h-[25px] border border-[#7f9db9] bg-white flex items-center pl-[1px] pb-[4px] text-[#8a8a8a]">搜索构件...</div>
                <div className="w-[22px] h-[25px] bg-[#f4f4f0] flex items-center justify-center">
                  <svg width={14} height={14} viewBox="0 0 14 14"><circle cx="8" cy="5.5" r="4" fill="none" stroke="#3b8fd0" strokeWidth="2" /><path d="M5 9l-4 4" stroke="#3b8fd0" strokeWidth="2" /></svg>
                </div>
              </div>
              <div className="flex-1 bg-white border-t border-x border-[#7f9db9] pt-[1px]">
                <div className="flex items-center h-[16px] pl-[13px] mt-[1px]">
                  <svg width={12} height={2} viewBox="0 0 12 2" className="shrink-0"><path d="M0 1h12" stroke="#a0a0a0" strokeDasharray="1 1" /></svg>
                  <ColumnIcon />
                  <span className="ml-[3px] w-[31px] h-[16px] leading-[16px] bg-[#316ac5] px-[2px]">框柱</span>
                </div>
              </div>
            </div>
            <div className="w-[8px] shrink-0 bg-[#d9d6c8] border-l border-[#8a8a80] border-r border-r-white" />
            <MainArea />
          </div>
        </div>
      </div>
      <Dialog />
      <Notes />
    </div>
  );
}
